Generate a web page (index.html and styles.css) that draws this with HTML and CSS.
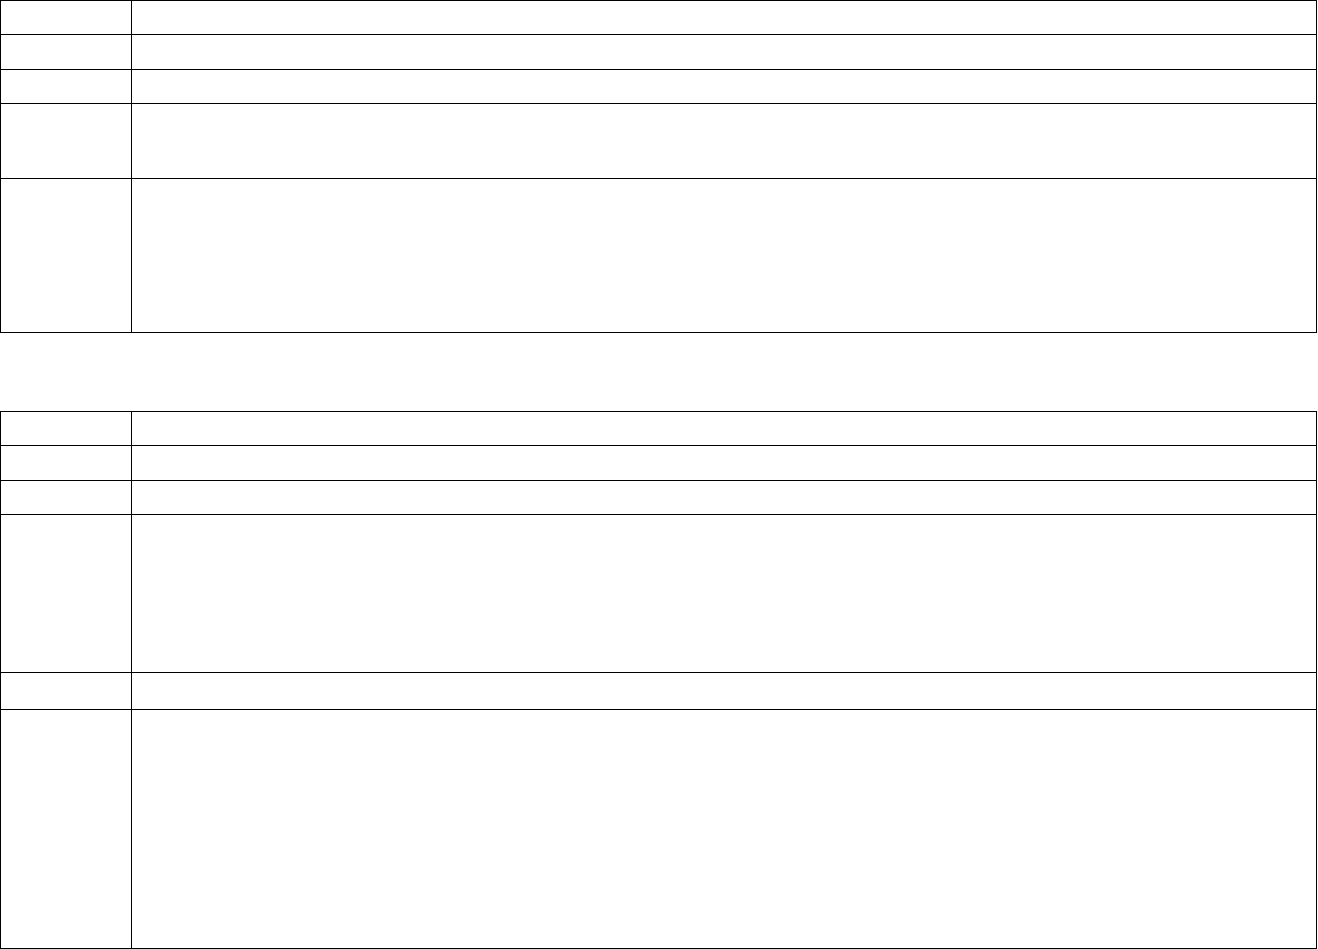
FILE: index.html
```html
<!DOCTYPE html>
<html lang="en">
<head>
<meta charset="utf-8">
<title>Tables</title>
<link rel="stylesheet" href="styles.css">
</head>
<body>
<table class="grid first">
  <colgroup><col class="c1"><col class="c2"></colgroup>
  <tr><td><div class="h33"></div></td><td><div class="h33"></div></td></tr>
  <tr><td><div class="h34"></div></td><td><div class="h34"></div></td></tr>
  <tr><td><div class="h33"></div></td><td><div class="h33"></div></td></tr>
  <tr><td><div class="h74"></div></td><td><div class="h74"></div></td></tr>
  <tr><td><div class="h153"></div></td><td><div class="h153"></div></td></tr>
</table>
<table class="grid second">
  <colgroup><col class="c1"><col class="c2"></colgroup>
  <tr><td><div class="h33"></div></td><td><div class="h33"></div></td></tr>
  <tr><td><div class="h34"></div></td><td><div class="h34"></div></td></tr>
  <tr><td><div class="h33"></div></td><td><div class="h33"></div></td></tr>
  <tr><td><div class="h157"></div></td><td><div class="h157"></div></td></tr>
  <tr><td><div class="h36"></div></td><td><div class="h36"></div></td></tr>
  <tr><td><div class="h238"></div></td><td><div class="h238"></div></td></tr>
</table>
</body>
</html>
```
FILE: styles.css
```css
html, body {
  margin: 0;
  padding: 0;
  background: #ffffff;
  font-family: "Liberation Serif", "Times New Roman", serif;
  font-size: 16px;
  color: #000;
}

.grid {
  border-collapse: separate;
  border-spacing: 0;
  table-layout: fixed;
  width: 1317px;
  border-top: 1px solid #000;
  border-left: 1px solid #000;
}

.grid td {
  padding: 0;
  vertical-align: top;
  border-right: 1px solid #000;
  border-bottom: 1px solid #000;
}

.c1 { width: 131px; }
.c2 { width: auto; }

.second { margin-top: 78px; }

.h33 { height: 33px; }
.h34 { height: 34px; }
.h36 { height: 36px; }
.h74 { height: 74px; }
.h153 { height: 153px; }
.h157 { height: 157px; }
.h238 { height: 238px; }
```
